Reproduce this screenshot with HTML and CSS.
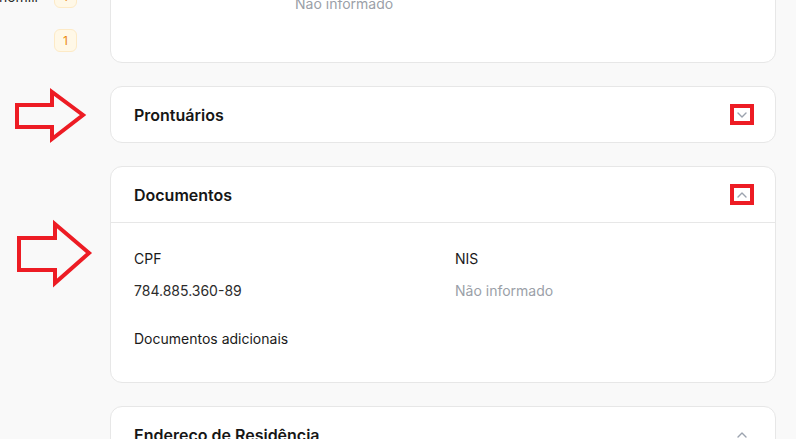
FILE: index.html
```html
<!DOCTYPE html>
<html lang="pt-BR">
<head>
<meta charset="utf-8">
<title>Prontuário</title>
<link rel="stylesheet" href="styles.css">
</head>
<body>
<div class="page">
  <aside class="sidebar">
    <div class="side-item"><span class="side-label">Acompanhamento Economili</span><span class="badge">1</span></div>
    <div class="side-item"><span class="side-label"></span><span class="badge">1</span></div>
  </aside>
  <main class="main">
    <section class="card card-top">
      <div class="grid-top">
        <div class="field"><div class="label">&nbsp;</div><div class="value">&nbsp;</div></div>
        <div class="field"><div class="label">&nbsp;</div><div class="value muted">Não informado</div></div>
      </div>
    </section>

    <section class="card">
      <header class="card-head">
        <h2 class="card-title">Prontuários</h2>
        <button class="toggle marked" type="button" aria-label="Expandir">
          <svg width="10" height="6" viewBox="0 0 10 6"><path d="M1 1l4 4 4-4" fill="none" stroke="#9ca3af" stroke-width="1.4" stroke-linecap="round" stroke-linejoin="round"/></svg>
        </button>
      </header>
    </section>

    <section class="card">
      <header class="card-head divided">
        <h2 class="card-title">Documentos</h2>
        <button class="toggle marked" type="button" aria-label="Recolher">
          <svg width="10" height="6" viewBox="0 0 10 6"><path d="M1 5l4-4 4 4" fill="none" stroke="#9ca3af" stroke-width="1.4" stroke-linecap="round" stroke-linejoin="round"/></svg>
        </button>
      </header>
      <div class="card-body">
        <div class="grid-two">
          <div class="field"><div class="label">CPF</div><div class="value">784.885.360-89</div></div>
          <div class="field"><div class="label">NIS</div><div class="value muted">Não informado</div></div>
        </div>
        <div class="field extra"><div class="label">Documentos adicionais</div></div>
      </div>
    </section>

    <section class="card">
      <header class="card-head">
        <h2 class="card-title">Endereço de Residência</h2>
        <button class="toggle" type="button" aria-label="Recolher">
          <svg width="10" height="6" viewBox="0 0 10 6"><path d="M1 5l4-4 4 4" fill="none" stroke="#9ca3af" stroke-width="1.4" stroke-linecap="round" stroke-linejoin="round"/></svg>
        </button>
      </header>
      <div class="card-body tall"></div>
    </section>
  </main>
</div>

<svg class="annotations" width="796" height="439" viewBox="0 0 796 439">
  <polygon points="17,105 52,105 52,92 83,115 52,139 52,127 17,127" fill="none" stroke="#ed1c24" stroke-width="4" stroke-linejoin="miter"/>
  <polygon points="19,238 55,238 55,224 89,253 55,283 55,270 19,270" fill="none" stroke="#ed1c24" stroke-width="4" stroke-linejoin="miter"/>
</svg>
</body>
</html>
```

FILE: styles.css
```css
* { box-sizing: border-box; }

html, body {
  margin: 0;
  padding: 0;
  background: #f9f9f9;
  overflow: hidden;
  height: 439px;
}

body {
  font-family: Inter, "Noto Sans", "Liberation Sans", sans-serif;
  color: #1f1f1f;
  font-size: 14px;
  line-height: 20px;
  position: relative;
}

.page {
  display: flex;
  align-items: flex-start;
  gap: 33px;
  margin-top: -65px;
}

.sidebar {
  width: 77px;
  flex: none;
  display: flex;
  flex-direction: column;
  gap: 21px;
  padding-top: 50px;
}

.side-item {
  display: flex;
  justify-content: flex-end;
  align-items: center;
  gap: 16px;
  height: 23px;
  white-space: nowrap;
}

.side-label {
  font-size: 14px;
  color: #2a2a2a;
}

.badge {
  flex: none;
  width: 23px;
  height: 23px;
  border-radius: 6px;
  background: #fff8e7;
  border: 1px solid #fdeac6;
  color: #ea8a0c;
  font-size: 12px;
  font-weight: 400;
  display: flex;
  align-items: center;
  justify-content: center;
}

.main {
  width: 666px;
  flex: none;
  display: flex;
  flex-direction: column;
  gap: 23px;
}

.card {
  background: #ffffff;
  border: 1px solid #e7e7e7;
  border-radius: 12px;
}

.card-top {
  padding: 26px 23px 48px;
}

.grid-top {
  display: grid;
  grid-template-columns: 161px 1fr;
}

.card-head {
  height: 55px;
  display: flex;
  align-items: center;
  justify-content: space-between;
  padding: 0 21px 0 23px;
}

.card-head.divided {
  height: 56px;
  border-bottom: 1px solid #e7e7e7;
}

.card-title {
  margin: 0;
  font-size: 16px;
  font-weight: 600;
  color: #161616;
  letter-spacing: 0;
}

.toggle {
  width: 24px;
  height: 21px;
  padding: 0;
  border: 0;
  background: #ffffff;
  display: flex;
  align-items: center;
  justify-content: center;
}

.toggle.marked {
  border: 4px solid #ed1c24;
}

.card-body {
  padding: 26px 23px 33px;
}

.card-body.tall {
  height: 200px;
}

.grid-two {
  display: grid;
  grid-template-columns: 1fr 1fr;
  column-gap: 24px;
}

.field {
  display: flex;
  flex-direction: column;
  gap: 12px;
}

.field.extra {
  margin-top: 28px;
}

.label {
  font-size: 14px;
  color: #1a1a1a;
}

.value {
  font-size: 14px;
  color: #2b2b2b;
}

.value.muted {
  color: #9b9fa8;
}

.annotations {
  position: absolute;
  left: 0;
  top: 0;
  pointer-events: none;
}
```
